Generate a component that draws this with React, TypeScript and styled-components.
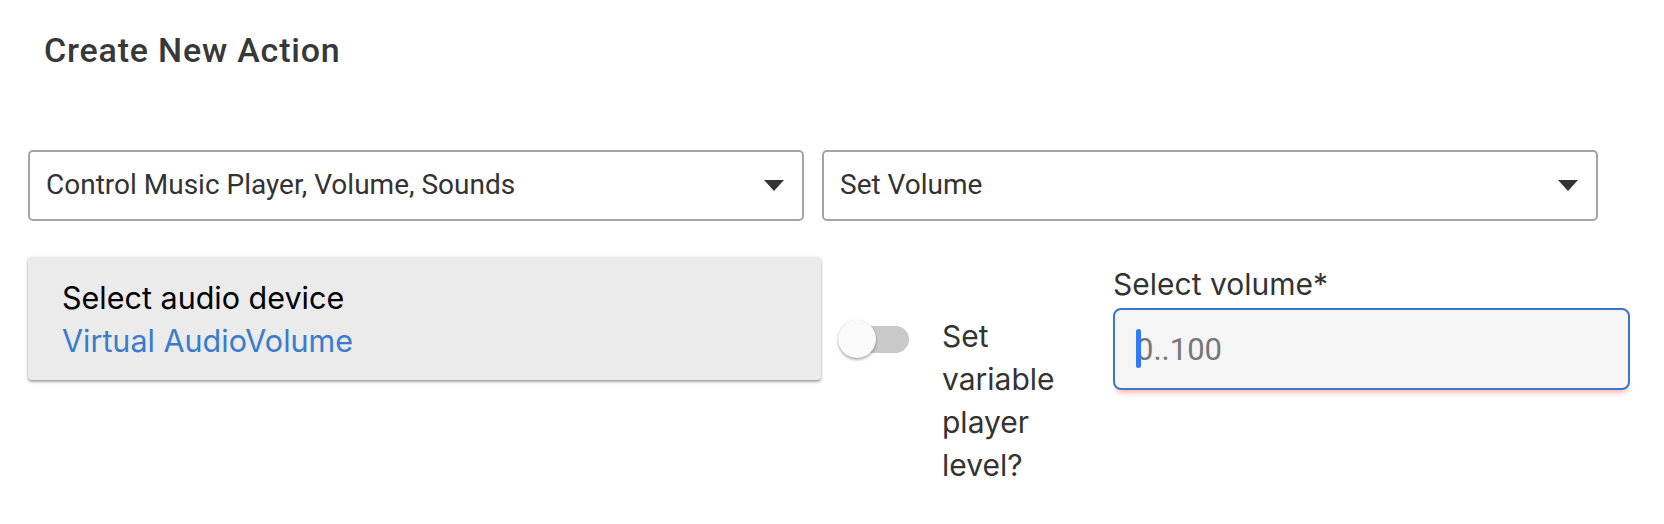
import React from "react";
import styled, { createGlobalStyle } from "styled-components";

const GlobalStyle = createGlobalStyle`
  html, body {
    margin: 0;
    padding: 0;
    background: #ffffff;
  }
  body {
    font-family: Roboto, "Liberation Sans", sans-serif;
  }
  * { box-sizing: border-box; }
`;

const Page = styled.div`
  width: 1664px;
  height: 524px;
  padding: 30px 0 0 28px;
  background: #ffffff;
`;

const Title = styled.h1`
  margin: 0 0 0 16px;
  font-family: Roboto, "Liberation Sans", sans-serif;
  font-weight: 500;
  font-size: 34px;
  line-height: 40px;
  letter-spacing: 0.8px;
  color: #383838;
`;

const SelectRow = styled.div`
  display: flex;
  gap: 18px;
  margin-top: 80px;
`;

const Select = styled.div`
  width: 776px;
  height: 71px;
  display: flex;
  align-items: center;
  justify-content: space-between;
  padding: 0 18px 0 16px;
  border: 2px solid #a4a4a4;
  border-radius: 5px;
  background: #ffffff;
`;

const SelectText = styled.span`
  font-family: Roboto, "Liberation Sans", sans-serif;
  font-size: 28px;
  color: #333333;
  margin-bottom: 2px;
`;

const Arrow = styled.span`
  width: 0;
  height: 0;
  border-left: 10.5px solid transparent;
  border-right: 10.5px solid transparent;
  border-top: 11px solid #333333;
`;

const FormRow = styled.div`
  display: flex;
  align-items: flex-start;
  margin-top: 36px;
`;

const DeviceCard = styled.div`
  width: 793px;
  height: 123px;
  padding: 19px 0 0 34px;
  background: #ebebeb;
  border-radius: 4px;
  box-shadow: 0 2px 3px rgba(0, 0, 0, 0.35), 0 0 3px rgba(0, 0, 0, 0.08);
`;

const CardLine = styled.div<{ $accent?: boolean }>`
  font-family: Inter, "Noto Sans", sans-serif;
  font-size: 30.5px;
  line-height: 43px;
  color: ${(p) => (p.$accent ? "#3b7bcc" : "#000000")};
`;

const SwitchGroup = styled.div`
  display: flex;
  align-items: flex-start;
  margin: 58px 0 0 17px;
`;

const Switch = styled.div`
  position: relative;
  width: 71px;
  height: 40px;
  margin-top: 4px;
  display: flex;
  align-items: center;
  justify-content: flex-end;
`;

const Track = styled.span`
  width: 60px;
  height: 27px;
  border-radius: 14px;
  background: #c9c9c9;
`;

const Thumb = styled.span`
  position: absolute;
  left: 0;
  top: 1px;
  width: 38px;
  height: 38px;
  border-radius: 50%;
  background: #fafafa;
  box-shadow: 0 2px 3px rgba(0, 0, 0, 0.3), 0 0 1px rgba(0, 0, 0, 0.15);
`;

const SwitchLabel = styled.div`
  width: 150px;
  margin-left: 33px;
  font-family: Inter, "Noto Sans", sans-serif;
  font-size: 30px;
  line-height: 43px;
  color: #333333;
`;

const Field = styled.div`
  width: 517px;
  margin: 9px 0 0 21px;
  display: flex;
  flex-direction: column;
  gap: 6px;
`;

const FieldLabel = styled.label`
  font-family: Inter, "Noto Sans", sans-serif;
  font-size: 30px;
  line-height: 36px;
  color: #333333;
`;

const InputWrap = styled.div`
  position: relative;
  height: 82px;
`;

const Input = styled.input`
  width: 100%;
  height: 100%;
  padding: 0 0 0 21px;
  border: 2px solid #3a77c8;
  border-radius: 8px;
  background: #f5f5f5;
  font-family: Roboto, "Liberation Sans", sans-serif;
  font-size: 31px;
  color: #333333;
  outline: none;
  box-shadow: 0 6px 6px -4px rgba(229, 57, 53, 0.45);
  &::placeholder {
    color: #777777;
  }
`;

const Caret = styled.span`
  position: absolute;
  left: 23px;
  top: 21px;
  width: 5px;
  height: 39px;
  border-radius: 3px;
  background: #2f7cf6;
`;

export default function App() {
  return (
    <>
      <GlobalStyle />
      <Page>
        <Title>Create New Action</Title>
        <SelectRow>
          <Select>
            <SelectText>Control Music Player, Volume, Sounds</SelectText>
            <Arrow />
          </Select>
          <Select>
            <SelectText>Set Volume</SelectText>
            <Arrow />
          </Select>
        </SelectRow>
        <FormRow>
          <DeviceCard>
            <CardLine>Select audio device</CardLine>
            <CardLine $accent>Virtual AudioVolume</CardLine>
          </DeviceCard>
          <SwitchGroup>
            <Switch>
              <Track />
              <Thumb />
            </Switch>
            <SwitchLabel>Set variable player level?</SwitchLabel>
          </SwitchGroup>
          <Field>
            <FieldLabel>Select volume*</FieldLabel>
            <InputWrap>
              <Input placeholder="0..100" readOnly />
              <Caret />
            </InputWrap>
          </Field>
        </FormRow>
      </Page>
    </>
  );
}
